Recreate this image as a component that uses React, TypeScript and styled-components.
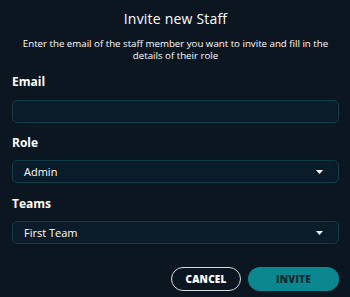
import React from "react";
import styled, { createGlobalStyle } from "styled-components";

const Global = createGlobalStyle`
  html, body { margin: 0; padding: 0; background: #0b1620; }
  body { font-family: "Open Sans", "Liberation Sans", sans-serif; }
  * { box-sizing: border-box; }
`;

const Dialog = styled.div`
  width: 350px;
  height: 297px;
  background: #0b1620;
  color: #ffffff;
  display: flex;
  flex-direction: column;
  padding: 10px 11px 0 12px;
`;

const Title = styled.h1`
  margin: 0;
  font-size: 14px;
  font-weight: 500;
  text-align: center;
  line-height: 18px;
  letter-spacing: 0.2px;
`;

const Subtitle = styled.p`
  margin: 10px 0 0;
  font-size: 9.7px;
  font-weight: 500;
  text-align: center;
  line-height: 11.5px;
  padding: 0 6px;
`;

const Field = styled.div<{ $top: number }>`
  display: flex;
  flex-direction: column;
  margin-top: ${(p) => p.$top}px;
`;

const Label = styled.label<{ $gap: number }>`
  font-size: 12px;
  font-weight: 700;
  line-height: 16px;
  margin-bottom: ${(p) => p.$gap}px;
`;

const Input = styled.input`
  height: 23px;
  width: 100%;
  background: #0a1c29;
  border: 1px solid #0f3c47;
  border-radius: 5px;
  outline: none;
  color: #fff;
  padding: 0 11px;
  font: inherit;
`;

const Select = styled.div`
  height: 23px;
  background: #0a1c29;
  border: 1px solid #0f3c47;
  border-radius: 5px;
  display: flex;
  align-items: center;
  justify-content: space-between;
  padding: 0 15px 0 11px;
  font-size: 11px;
  font-weight: 500;
`;

const Caret = styled.svg`
  width: 7px;
  height: 4px;
  fill: #ffffff;
`;

const Actions = styled.div`
  display: flex;
  justify-content: flex-end;
  gap: 7px;
  margin-top: 23px;
`;

const Button = styled.button<{ $primary?: boolean }>`
  height: 24px;
  border-radius: 12px;
  font-family: inherit;
  font-size: 10px;
  font-weight: 800;
  letter-spacing: 0.2px;
  cursor: pointer;
  width: ${(p) => (p.$primary ? "91px" : "70px")};
  background: ${(p) => (p.$primary ? "#0b8790" : "transparent")};
  color: ${(p) => (p.$primary ? "#0a2833" : "#ffffff")};
  border: ${(p) => (p.$primary ? "none" : "1px solid #d8dde0")};
`;

const Chevron = () => (
  <Caret viewBox="0 0 7 4">
    <path d="M0 0h7L3.5 4z" />
  </Caret>
);

export default function App() {
  return (
    <>
      <Global />
      <Dialog>
        <Title>Invite new Staff</Title>
        <Subtitle>
          Enter the email of the staff member you want to invite and fill in the details of their role
        </Subtitle>
        <Field $top={13}>
          <Label $gap={10}>Email</Label>
          <Input />
        </Field>
        <Field $top={12}>
          <Label $gap={9}>Role</Label>
          <Select>
            <span>Admin</span>
            <Chevron />
          </Select>
        </Field>
        <Field $top={13}>
          <Label $gap={9}>Teams</Label>
          <Select>
            <span>First Team</span>
            <Chevron />
          </Select>
        </Field>
        <Actions>
          <Button>CANCEL</Button>
          <Button $primary>INVITE</Button>
        </Actions>
      </Dialog>
    </>
  );
}
